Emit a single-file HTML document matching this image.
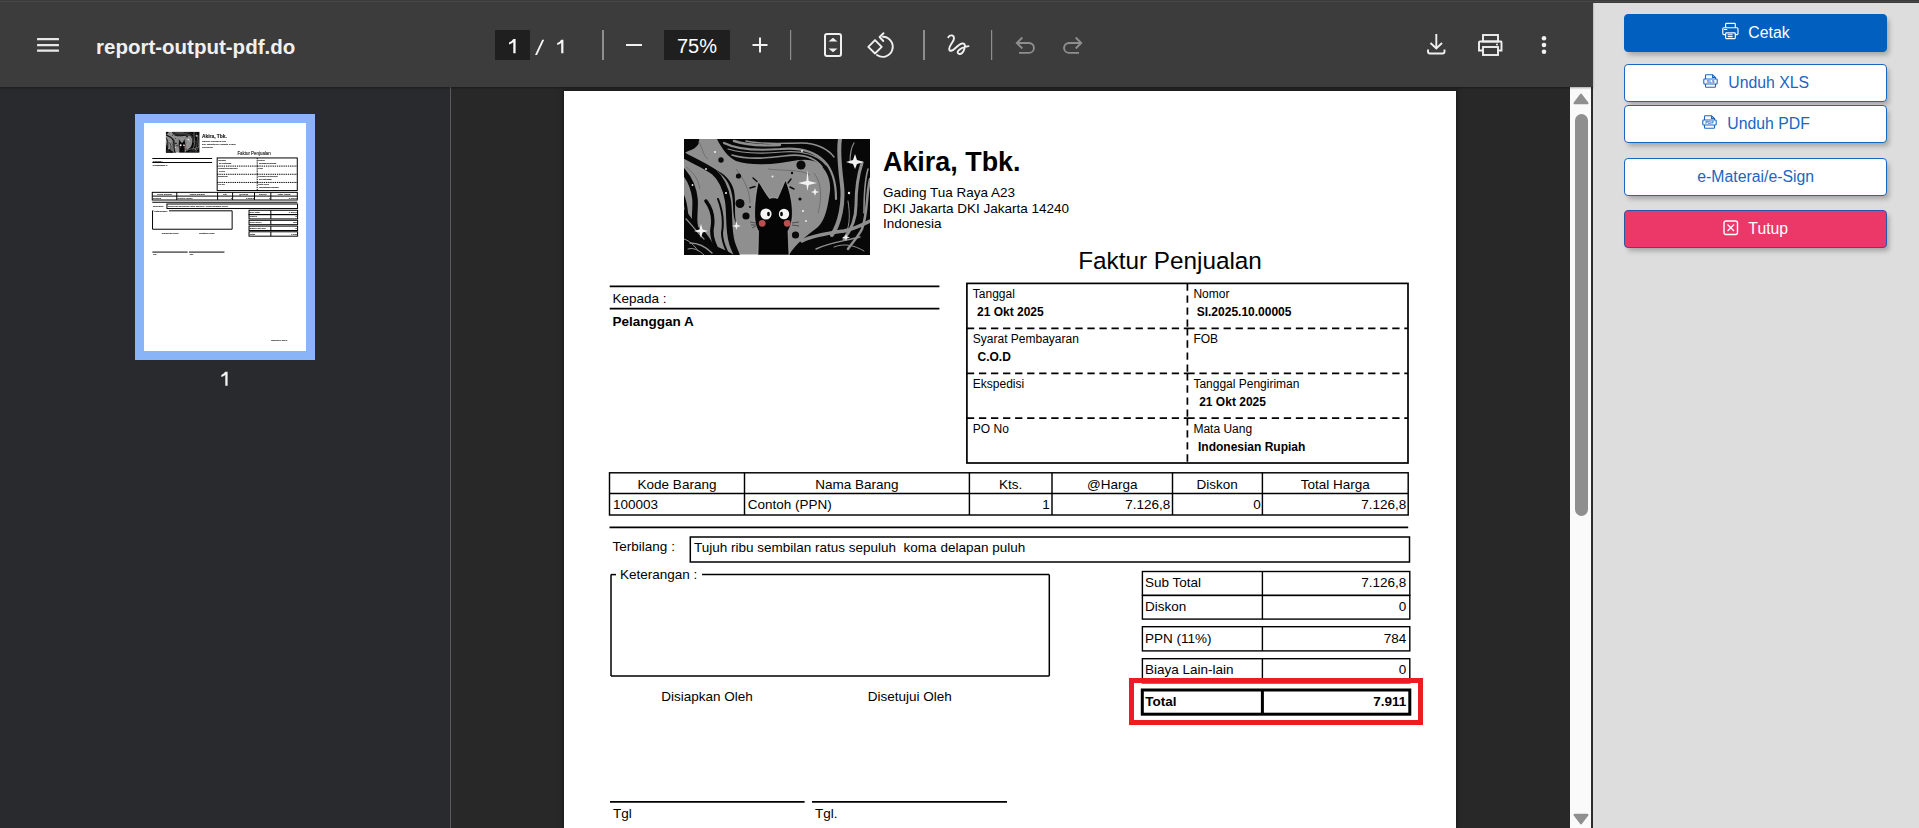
<!DOCTYPE html>
<html><head><meta charset="utf-8">
<style>
*{margin:0;padding:0;box-sizing:border-box}
html,body{width:1919px;height:828px;overflow:hidden;background:#282828;font-family:"Liberation Sans",sans-serif}
.abs{position:absolute}
#toolbar{position:absolute;left:0;top:0;width:1593px;height:87px;background:#3c3c3c;z-index:2;box-shadow:0 1px 2px rgba(0,0,0,0.35)}
#sidebar{position:absolute;left:0;top:87px;width:450px;height:741px;background:#292a2d}
#sidesep{position:absolute;left:450px;top:87px;width:1px;height:741px;background:#5a5a5a}
#page{position:absolute;left:564px;top:91px;width:892px;height:737px;background:#fff;overflow:hidden;box-shadow:0 0 4px 1px rgba(0,0,0,0.42)}
#thumbwrap{position:absolute;left:135px;top:114px;width:180px;height:246px;background:#8ab4f8}
#thumb{position:absolute;left:9px;top:9px;width:162px;height:228px;background:#fff;overflow:hidden}
#thumbin .t{-webkit-text-stroke:0.9px #555}
#thumbin{position:absolute;left:0;top:0;width:892px;height:1262px;transform:scale(0.18161);transform-origin:0 0}
#scroll{position:absolute;left:1570px;top:87px;width:21px;height:741px;background:#fafafa}
#scrollline{position:absolute;left:1591px;top:3px;width:2px;height:825px;background:#2d2d2d}
#panel{position:absolute;left:1593px;top:3px;width:326px;height:825px;background:#dddddd}
.btn{position:absolute;left:31px;width:263px;border-radius:4px;box-shadow:3px 4px 5px -1px rgba(0,0,0,0.26)}
.primary{background:#005fbf;border:1px solid #005fbf}
.outline{background:#fff;border:1px solid #1a66c0}
.danger{background:#ec3869;border:1px solid #2a58a0}
.bt{position:absolute;top:10px;margin-left:-0.7px;font-size:15.8px;line-height:1;white-space:nowrap}
.primary .bt,.danger .bt{color:#fff}
.outline .bt{color:#1a66c0}
.ico{position:absolute}
.t{position:absolute;white-space:nowrap;line-height:1}
</style></head><body>
<div id="toolbar">
<svg class="abs" style="left:0;top:0" width="1593" height="87" viewBox="0 0 1593 87">
 <g fill="#e8e8e8">
  <rect x="37" y="38" width="22" height="2.2" rx="0.5"/>
  <rect x="37" y="44" width="22" height="2.2" rx="0.5"/>
  <rect x="37" y="49.5" width="22" height="2.2" rx="0.5"/>
 </g>
 <rect x="495" y="30" width="35" height="30" fill="#1f1f1f"/>
 <rect x="664" y="30" width="66" height="30" fill="#1f1f1f"/>
 <g fill="#8e8e8e">
  <rect x="602" y="30" width="2" height="30"/>
  <rect x="790" y="30" width="1.2" height="30"/>
  <rect x="923" y="30" width="2" height="30"/>
  <rect x="991" y="30" width="1.2" height="30"/>
 </g>
 <g fill="none" stroke="#f0f0f0" stroke-width="2">
  <line x1="626" y1="45" x2="642" y2="45"/>
  <line x1="752.5" y1="45" x2="767.5" y2="45"/>
  <line x1="760" y1="37.5" x2="760" y2="52.5"/>
  <rect x="825" y="34" width="16" height="22" rx="2"/>
 </g>
 <g fill="#f0f0f0">
  <path d="M828.5 41.5 L833 37.8 L837.5 41.5 Z"/>
  <path d="M828.5 48.5 L833 52.2 L837.5 48.5 Z"/>
 </g>
 <g fill="none" stroke="#f0f0f0" stroke-width="1.9" stroke-linecap="round" stroke-linejoin="round">
  <path d="M868.3 46.8 L875 40.1 L881.7 46.8 L875 53.5 Z"/>
  <path d="M877 55 A10 10 0 1 0 883 36.8"/>
  <path d="M883.5 33.2 L879.6 37 L883.3 41"/>
  <path d="M948.3 37.3 C950 34.5 953.8 34.8 954 38.2 C954.2 41.5 949.3 45 949.2 48.8 C949.1 52 952.5 51 955.5 48 C958.3 45.2 961 42.5 963.7 43.7 C966.5 45.2 963.5 54.5 959.3 54 C955.3 53.3 958.5 47.8 968.5 46.1"/>
 </g>
 <g fill="none" stroke="#8e8e8e" stroke-width="1.9" stroke-linejoin="miter">
  <path d="M1022.3 37.5 L1016.8 43 L1022.3 48.5"/>
  <path d="M1016.8 43 L1029 43 A4.95 4.95 0 0 1 1029 52.9 L1019 52.9"/>
  <path d="M1075.7 37.5 L1081.2 43 L1075.7 48.5"/>
  <path d="M1081.2 43 L1069 43 A4.95 4.95 0 0 0 1069 52.9 L1079 52.9"/>
 </g>
 <g fill="none" stroke="#f0f0f0" stroke-width="1.9">
  <line x1="1436.3" y1="34" x2="1436.3" y2="48"/>
  <path d="M1430.5 43 L1436.3 48.5 L1442 43"/>
  <path d="M1428 49.5 L1428 51.5 Q1428 53.5 1430 53.5 L1442.5 53.5 Q1444.5 53.5 1444.5 51.5 L1444.5 49.5"/>
  <rect x="1483" y="35" width="15" height="6.5"/>
  <path d="M1483 50.5 L1479 50.5 L1479 42.5 Q1479 41.5 1480 41.5 L1501 41.5 Q1501.5 41.5 1501.5 42.5 L1501.5 50.5 L1497.5 50.5"/>
  <rect x="1483" y="47" width="15" height="8"/>
 </g>
 <g fill="#f0f0f0">
  <circle cx="1497" cy="44.5" r="1"/>
  <circle cx="1544" cy="38.2" r="2.3"/>
  <circle cx="1544" cy="45" r="2.3"/>
  <circle cx="1544" cy="51.7" r="2.3"/>
 </g>
 <g fill="#f8f8f8">
  <path d="M513.3 38.9 H515.6 V53.2 H513.3 V42.3 Q511.5 43.8 509 44.6 V42.5 Q512 41.3 513.3 38.9 Z"/>
  <path d="M542.2 39.7 H544.2 L537 55 H535 Z"/>
  <path d="M561.2 39.7 H563.4 V53.2 H561.2 V43 Q559.5 44.4 557.2 45.1 V43.1 Q560 42 561.2 39.7 Z"/>
 </g>
</svg>
<div class="t" style="left:96px;top:37.4px;font-size:20.5px;font-weight:bold;color:#f0f0f0">report-output-pdf.do</div>
<div class="t" style="left:677px;top:36px;font-size:20px;color:#fff">75%</div>
</div>
<div id="sidebar"></div>
<div id="sidesep"></div>
<div id="thumbwrap"><div id="thumb"><div id="thumbin">
<svg class="abs" style="left:0;top:0" width="892" height="1262" viewBox="0 0 892 1262">
<line x1="45.70" y1="195.40" x2="375.40" y2="195.40" stroke="#000" stroke-width="5.460000000000001"/>
<line x1="45.70" y1="217.60" x2="375.40" y2="217.60" stroke="#000" stroke-width="5.460000000000001"/>
<rect x="402.90" y="192.40" width="441.10" height="179.60" fill="none" stroke="#000" stroke-width="5.460000000000001"/>
<line x1="623.40" y1="192.40" x2="623.40" y2="237.30" stroke="#000" stroke-width="5.460000000000001" stroke-dasharray="7.3 4.75"/>
<line x1="623.40" y1="237.30" x2="623.40" y2="282.30" stroke="#000" stroke-width="5.460000000000001" stroke-dasharray="7.3 4.75"/>
<line x1="623.40" y1="282.30" x2="623.40" y2="327.20" stroke="#000" stroke-width="5.460000000000001" stroke-dasharray="7.3 4.75"/>
<line x1="623.40" y1="327.20" x2="623.40" y2="372.00" stroke="#000" stroke-width="5.460000000000001" stroke-dasharray="7.3 4.75"/>
<line x1="402.90" y1="237.30" x2="623.40" y2="237.30" stroke="#000" stroke-width="5.460000000000001" stroke-dasharray="7.3 4.75"/>
<line x1="623.40" y1="237.30" x2="844.00" y2="237.30" stroke="#000" stroke-width="5.460000000000001" stroke-dasharray="7.3 4.75"/>
<line x1="402.90" y1="282.30" x2="623.40" y2="282.30" stroke="#000" stroke-width="5.460000000000001" stroke-dasharray="7.3 4.75"/>
<line x1="623.40" y1="282.30" x2="844.00" y2="282.30" stroke="#000" stroke-width="5.460000000000001" stroke-dasharray="7.3 4.75"/>
<line x1="402.90" y1="327.20" x2="623.40" y2="327.20" stroke="#000" stroke-width="5.460000000000001" stroke-dasharray="7.3 4.75"/>
<line x1="623.40" y1="327.20" x2="844.00" y2="327.20" stroke="#000" stroke-width="5.460000000000001" stroke-dasharray="7.3 4.75"/>
<rect x="45.50" y="381.80" width="798.70" height="42.20" fill="none" stroke="#000" stroke-width="5.460000000000001"/>
<line x1="45.50" y1="402.50" x2="844.20" y2="402.50" stroke="#000" stroke-width="5.460000000000001"/>
<line x1="180.50" y1="381.80" x2="180.50" y2="424.00" stroke="#000" stroke-width="5.460000000000001"/>
<line x1="405.40" y1="381.80" x2="405.40" y2="424.00" stroke="#000" stroke-width="5.460000000000001"/>
<line x1="488.00" y1="381.80" x2="488.00" y2="424.00" stroke="#000" stroke-width="5.460000000000001"/>
<line x1="608.50" y1="381.80" x2="608.50" y2="424.00" stroke="#000" stroke-width="5.460000000000001"/>
<line x1="698.40" y1="381.80" x2="698.40" y2="424.00" stroke="#000" stroke-width="5.460000000000001"/>
<line x1="45.50" y1="436.40" x2="844.20" y2="436.40" stroke="#000" stroke-width="5.460000000000001"/>
<rect x="126.30" y="446.00" width="719.20" height="25.00" fill="none" stroke="#000" stroke-width="5.460000000000001"/>
<line x1="47.00" y1="483.60" x2="52.00" y2="483.60" stroke="#000" stroke-width="5.460000000000001"/>
<line x1="138.00" y1="483.60" x2="485.30" y2="483.60" stroke="#000" stroke-width="5.460000000000001"/>
<line x1="47.00" y1="483.60" x2="47.00" y2="584.90" stroke="#000" stroke-width="5.460000000000001"/>
<line x1="485.30" y1="483.60" x2="485.30" y2="584.90" stroke="#000" stroke-width="5.460000000000001"/>
<line x1="47.00" y1="584.90" x2="485.30" y2="584.90" stroke="#000" stroke-width="5.460000000000001"/>
<line x1="46.00" y1="710.80" x2="240.60" y2="710.80" stroke="#000" stroke-width="5.460000000000001"/>
<line x1="248.00" y1="710.80" x2="443.00" y2="710.80" stroke="#000" stroke-width="5.460000000000001"/>
<rect x="578.40" y="480.50" width="267.40" height="23.90" fill="none" stroke="#000" stroke-width="5.460000000000001"/>
<rect x="578.40" y="504.40" width="267.40" height="23.70" fill="none" stroke="#000" stroke-width="5.460000000000001"/>
<line x1="698.40" y1="480.50" x2="698.40" y2="528.10" stroke="#000" stroke-width="5.460000000000001"/>
<rect x="578.40" y="535.70" width="267.40" height="24.20" fill="none" stroke="#000" stroke-width="5.460000000000001"/>
<line x1="698.40" y1="535.70" x2="698.40" y2="559.90" stroke="#000" stroke-width="5.460000000000001"/>
<rect x="578.40" y="567.70" width="267.40" height="24.10" fill="none" stroke="#000" stroke-width="5.460000000000001"/>
<line x1="698.40" y1="567.70" x2="698.40" y2="591.80" stroke="#000" stroke-width="5.460000000000001"/>
<rect x="578.30" y="599.00" width="267.50" height="24.20" fill="none" stroke="#000" stroke-width="5.460000000000001"/>
<line x1="698.40" y1="599.00" x2="698.40" y2="623.20" stroke="#000" stroke-width="5.460000000000001"/>
</svg>
<div class="abs" style="left:120px;top:48px;width:186px;height:115.5px"><svg width="186" height="115.5" viewBox="0 0 186 115.5" style="display:block">
<rect width="186" height="115.5" fill="#8f8f8f"/>
<g fill="#080808">
 <!-- top-left blob -->
 <path d="M0 0 H15 C16 5 12 9 7 11 C3 12 1 14 0 15 Z"/>
 <!-- top black mass (arc) -->
 <path d="M33 0 H186 V116 H105 C112 104 124 96 134 88 C142 80 144 66 146 52 C147 40 142 30 134 24 C124 18 110 22 96 24 C80 26 64 26 52 22 C44 18 38 10 33 0 Z"/>
 <!-- bottom left mass -->
 <path d="M0 70 C6 76 10 84 14 88 C22 92 26 100 30 106 C34 112 38 114 40 116 H0 Z"/>
 <path d="M30 30 C40 36 46 44 48 56 C50 66 48 76 52 84 C50 74 52 62 50 52 C48 42 40 34 30 30 Z"/>
 <path d="M0 92 C8 96 16 100 24 104 C34 108 44 112 50 116 H0 Z"/>
</g>
<g fill="none" stroke="#080808" stroke-linecap="round">
 <path d="M1 17 C10 22 20 26 30 33 C38 40 42 50 44 62 C46 76 44 90 48 104 C50 110 52 114 53 117" stroke-width="6"/>
 <path d="M-1 32 C6 40 10 50 11 60 C12 72 8 84 14 96 C18 104 22 110 26 117" stroke-width="5.5"/>
 <path d="M-2 55 C3 64 2 74 4 86" stroke-width="3"/>
 <path d="M22 62 C28 70 30 80 28 90 C27 100 32 108 36 117" stroke-width="3.5"/>
 <path d="M34 60 C38 70 40 82 38 94 C38 104 42 110 45 117" stroke-width="2"/>
</g>
<!-- gray streaks over black masses -->
<g fill="none" stroke="#8f8f8f" stroke-linecap="round">
 <path d="M40 4 C52 10 70 12 96 10 C116 8 130 12 140 22 C148 30 152 44 152 60" stroke-width="2.2"/>
 <path d="M62 2 C80 6 100 4 118 4 C132 4 144 10 150 18" stroke-width="1.4"/>
 <path d="M48 16 C60 20 78 20 100 17 C120 14 132 20 138 28" stroke-width="1.6"/>
 <path d="M44 10 C56 14 76 15 98 13 C118 11 134 16 142 26" stroke-width="1.2"/>
 <path d="M50 2 C62 6 78 7 96 6" stroke-width="2.4"/>
 <path d="M156 0 C154 12 156 30 158 46 C160 64 156 84 148 96" stroke-width="4"/>
 <path d="M178 24 C174 36 172 52 172 66 C172 80 168 90 160 100" stroke-width="3"/>
 <path d="M184 30 C180 44 180 60 180 74" stroke-width="1.6"/>
 <path d="M186 40 C182 56 184 74 178 90 C174 98 168 104 164 110" stroke-width="2.5"/>
 <path d="M150 108 C160 104 170 106 180 112" stroke-width="1"/>
 <path d="M164 62 C166 74 166 86 162 94" stroke-width="1"/>
 <path d="M170 4 C166 10 166 18 166 24" stroke-width="1.2"/>
 <path d="M118 102 C130 96 146 94 160 92 C170 90 178 86 186 82" stroke-width="3.5"/>
 <path d="M132 110 C144 104 160 102 176 98" stroke-width="1.4"/>
 <path d="M6 104 C14 104 22 108 28 114" stroke-width="1.4"/>
 <path d="M2 80 C8 86 12 92 20 100" stroke-width="1.2"/>
 <path d="M4 110 C10 108 16 112 20 116" stroke-width="1"/>
 <path d="M0 100 C6 102 10 106 14 112" stroke-width="1"/>
</g>
<g fill="none" stroke="#5a5a5a" stroke-width="0.6">
 <path d="M14 2 C20 10 18 16 24 20"/><path d="M52 30 C60 40 66 52 66 64"/><path d="M130 34 C138 44 138 60 134 74"/>
 <path d="M2 28 C10 34 14 40 16 50"/><path d="M84 30 C100 32 116 30 126 36"/>
</g>
<!-- cat -->
<path d="M74.5 42.5 C78 48 82 55 85.5 59.5 C88 58.5 91 58.5 93.5 59.5 C96 54 99 47 101.6 41 C105 50 108 60 108.4 72 C108.6 82 106.5 88 104 92 L105 116 L74 116 L74.5 92 C71.5 88 70.3 80 70.6 72 C71 60 72.5 50 74.5 42.5 Z" fill="#050505" stroke="#c0c0c0" stroke-width="0.6"/>
<circle cx="82" cy="75" r="5.6" fill="#f4f4f4"/>
<circle cx="100" cy="75" r="5.2" fill="#f4f4f4"/>
<ellipse cx="84.5" cy="75" rx="1.4" ry="2.2" fill="#000"/>
<ellipse cx="97.5" cy="75" rx="1.4" ry="2.2" fill="#000"/>
<circle cx="78.2" cy="84.3" r="3.4" fill="#b85050"/>
<circle cx="103.2" cy="84.3" r="3.4" fill="#b85050"/>
<g stroke="#111" stroke-width="0.5"><path d="M66 83 L72 84 M67 86 L72 86 M68 89 L72 87 M108 84 L115 83 M108 86 L115 87"/></g>
<g fill="#f2f2f2">
 <path d="M17 93 L18.6 87.5 L24 86 L18.6 84.5 L17 79 L15.4 84.5 L10 86 L15.4 87.5 Z" transform="translate(0,6)"/>
 <path d="M123.5 52 L124.6 46 L133 44 L124.6 42 L123.5 31 L122.4 42 L114 44 L122.4 46 Z"/>
 <path d="M172 30 L174 25 L181 23 L174 21 L172 15 L170 21 L163 23 L170 25 Z" transform="translate(-1,0)"/>
 <path d="M52.5 91 L53.4 88 L57 87 L53.4 86 L52.5 82 L51.6 86 L48 87 L51.6 88 Z"/>
 <path d="M130 56 L131 53 L134 52 L131 51 L130 48 L129 51 L126 52 L129 53 Z" transform="translate(1,1)"/>
 <path d="M162 102 L163 99.5 L166 98.5 L163 97.5 L162 95 L161 97.5 L158 98.5 L161 99.5 Z"/>
 <circle cx="31" cy="13" r="1"/><circle cx="22" cy="30" r="0.9"/><circle cx="8.5" cy="46" r="0.9"/>
 <circle cx="165" cy="54" r="1.2"/><circle cx="118" cy="12" r="1"/><circle cx="42" cy="54" r="1"/>
 <circle cx="88.5" cy="37.5" r="1"/><circle cx="119" cy="72" r="1"/><circle cx="122" cy="82" r="0.9"/>
 <path d="M55 64 L57 62 L59 64 L58 66 L56 66 Z" opacity="0.8"/>
</g>
<g fill="#0a0a0a">
 <circle cx="37" cy="21" r="2.7"/><circle cx="117" cy="26" r="4.6"/><circle cx="54.5" cy="37" r="2.6"/>
 <circle cx="56" cy="64.5" r="4.5"/><circle cx="62" cy="77" r="3.6"/><circle cx="111.5" cy="96" r="3.6"/>
 <circle cx="108" cy="34" r="1.2"/><circle cx="66" cy="68" r="1"/><circle cx="116" cy="60" r="1.6"/>
</g>
<g stroke="#0a0a0a" stroke-width="1.4" stroke-linecap="round">
 <path d="M69 39 L73 42.5"/><path d="M66 49 L71 47.5"/><path d="M107 40 L104 44"/><path d="M110 50 L106 48"/>
</g>
</svg>
</div>
<div class="t" style="left:319.00px;top:58.23px;font-size:26.9px;font-weight:bold;color:#000;">Akira, Tbk.</div>
<div class="t" style="left:319.00px;top:94.97px;font-size:13.5px;font-weight:normal;color:#000;">Gading Tua Raya A23</div>
<div class="t" style="left:319.00px;top:110.97px;font-size:13.5px;font-weight:normal;color:#000;">DKI Jakarta DKI Jakarta 14240</div>
<div class="t" style="left:319.00px;top:126.37px;font-size:13.5px;font-weight:normal;color:#000;">Indonesia</div>
<div class="t" style="left:514.20px;top:158.43px;font-size:24.3px;font-weight:normal;color:#000;">Faktur Penjualan</div>
<div class="t" style="left:48.50px;top:200.57px;font-size:13.5px;font-weight:normal;color:#000;">Kepada :</div>
<div class="t" style="left:48.50px;top:224.27px;font-size:13.5px;font-weight:bold;color:#000;">Pelanggan A</div>
<div class="t" style="left:408.80px;top:197.14px;font-size:12px;font-weight:normal;color:#000;">Tanggal</div>
<div class="t" style="left:413.00px;top:214.84px;font-size:12px;font-weight:bold;color:#000;">21 Okt 2025</div>
<div class="t" style="left:629.40px;top:197.14px;font-size:12px;font-weight:normal;color:#000;">Nomor</div>
<div class="t" style="left:632.70px;top:215.24px;font-size:12px;font-weight:bold;color:#000;">SI.2025.10.00005</div>
<div class="t" style="left:408.80px;top:242.44px;font-size:12px;font-weight:normal;color:#000;">Syarat Pembayaran</div>
<div class="t" style="left:413.50px;top:260.34px;font-size:12px;font-weight:bold;color:#000;">C.O.D</div>
<div class="t" style="left:629.40px;top:242.44px;font-size:12px;font-weight:normal;color:#000;">FOB</div>
<div class="t" style="left:408.80px;top:286.94px;font-size:12px;font-weight:normal;color:#000;">Ekspedisi</div>
<div class="t" style="left:629.40px;top:287.04px;font-size:12px;font-weight:normal;color:#000;">Tanggal Pengiriman</div>
<div class="t" style="left:635.20px;top:304.94px;font-size:12px;font-weight:bold;color:#000;">21 Okt 2025</div>
<div class="t" style="left:408.80px;top:332.14px;font-size:12px;font-weight:normal;color:#000;">PO No</div>
<div class="t" style="left:629.40px;top:332.14px;font-size:12px;font-weight:normal;color:#000;">Mata Uang</div>
<div class="t" style="left:634.00px;top:350.24px;font-size:12px;font-weight:bold;color:#000;">Indonesian Rupiah</div>
<div class="t" style="left:-187.00px;width:600px;text-align:center;top:386.57px;font-size:13.5px;font-weight:normal;color:#000;">Kode Barang</div>
<div class="t" style="left:-7.10px;width:600px;text-align:center;top:386.57px;font-size:13.5px;font-weight:normal;color:#000;">Nama Barang</div>
<div class="t" style="left:146.70px;width:600px;text-align:center;top:386.57px;font-size:13.5px;font-weight:normal;color:#000;">Kts.</div>
<div class="t" style="left:248.30px;width:600px;text-align:center;top:386.57px;font-size:13.5px;font-weight:normal;color:#000;">@Harga</div>
<div class="t" style="left:353.20px;width:600px;text-align:center;top:386.57px;font-size:13.5px;font-weight:normal;color:#000;">Diskon</div>
<div class="t" style="left:471.20px;width:600px;text-align:center;top:386.57px;font-size:13.5px;font-weight:normal;color:#000;">Total Harga</div>
<div class="t" style="left:49.00px;top:407.47px;font-size:13.5px;font-weight:normal;color:#000;">100003</div>
<div class="t" style="left:183.70px;top:407.47px;font-size:13.5px;font-weight:normal;color:#000;">Contoh (PPN)</div>
<div class="t" style="left:85.80px;width:400px;text-align:right;top:407.47px;font-size:13.5px;font-weight:normal;color:#000;">1</div>
<div class="t" style="left:206.30px;width:400px;text-align:right;top:407.47px;font-size:13.5px;font-weight:normal;color:#000;">7.126,8</div>
<div class="t" style="left:296.80px;width:400px;text-align:right;top:407.47px;font-size:13.5px;font-weight:normal;color:#000;">0</div>
<div class="t" style="left:442.30px;width:400px;text-align:right;top:407.47px;font-size:13.5px;font-weight:normal;color:#000;">7.126,8</div>
<div class="t" style="left:48.60px;top:449.07px;font-size:13.5px;font-weight:normal;color:#000;">Terbilang :</div>
<div class="t" style="left:130.00px;top:450.07px;font-size:13.5px;font-weight:normal;color:#000;">Tujuh ribu sembilan ratus sepuluh&nbsp; koma delapan puluh</div>
<div class="t" style="left:56.00px;top:476.97px;font-size:13.5px;font-weight:normal;color:#000;">Keterangan :</div>
<div class="t" style="left:97.20px;top:599.07px;font-size:13.5px;font-weight:normal;color:#000;">Disiapkan Oleh</div>
<div class="t" style="left:303.80px;top:599.07px;font-size:13.5px;font-weight:normal;color:#000;">Disetujui Oleh</div>
<div class="t" style="left:49.00px;top:715.57px;font-size:13.5px;font-weight:normal;color:#000;">Tgl</div>
<div class="t" style="left:251.00px;top:715.57px;font-size:13.5px;font-weight:normal;color:#000;">Tgl.</div>
<div class="t" style="left:581.00px;top:485.07px;font-size:13.5px;font-weight:normal;color:#000;">Sub Total</div>
<div class="t" style="left:442.30px;width:400px;text-align:right;top:485.07px;font-size:13.5px;font-weight:normal;color:#000;">7.126,8</div>
<div class="t" style="left:581.00px;top:508.97px;font-size:13.5px;font-weight:normal;color:#000;">Diskon</div>
<div class="t" style="left:442.30px;width:400px;text-align:right;top:508.97px;font-size:13.5px;font-weight:normal;color:#000;">0</div>
<div class="t" style="left:581.00px;top:541.17px;font-size:13.5px;font-weight:normal;color:#000;">PPN (11%)</div>
<div class="t" style="left:442.30px;width:400px;text-align:right;top:541.17px;font-size:13.5px;font-weight:normal;color:#000;">784</div>
<div class="t" style="left:581.00px;top:572.07px;font-size:13.5px;font-weight:normal;color:#000;">Biaya Lain-lain</div>
<div class="t" style="left:442.30px;width:400px;text-align:right;top:572.07px;font-size:13.5px;font-weight:normal;color:#000;">0</div>
<div class="t" style="left:581.30px;top:604.07px;font-size:13.5px;font-weight:bold;color:#000;">Total</div>
<div class="t" style="left:442.30px;width:400px;text-align:right;top:604.07px;font-size:13.5px;font-weight:bold;color:#000;">7.911</div>
<div class="t" style="left:699.00px;top:1192.84px;font-size:12px;font-weight:normal;color:#000;">Halaman 1 dari 1</div>

</div></div></div>
<svg class="abs" style="left:215px;top:365px" width="20" height="25" viewBox="215 365 20 25"><path d="M225.2 371.8 H227.6 V385.8 H225.3 V375 Q223.5 376.3 221.3 377 V374.9 Q224 373.8 225.2 371.8 Z" fill="#f2f2f2"/></svg>
<div id="page">
<svg class="abs" style="left:0;top:0" width="892" height="1262" viewBox="0 0 892 1262">
<line x1="45.70" y1="195.40" x2="375.40" y2="195.40" stroke="#000" stroke-width="1.7"/>
<line x1="45.70" y1="217.60" x2="375.40" y2="217.60" stroke="#000" stroke-width="1.7"/>
<rect x="402.90" y="192.40" width="441.10" height="179.60" fill="none" stroke="#000" stroke-width="1.7"/>
<line x1="623.40" y1="192.40" x2="623.40" y2="237.30" stroke="#000" stroke-width="1.7" stroke-dasharray="7.3 4.75"/>
<line x1="623.40" y1="237.30" x2="623.40" y2="282.30" stroke="#000" stroke-width="1.7" stroke-dasharray="7.3 4.75"/>
<line x1="623.40" y1="282.30" x2="623.40" y2="327.20" stroke="#000" stroke-width="1.7" stroke-dasharray="7.3 4.75"/>
<line x1="623.40" y1="327.20" x2="623.40" y2="372.00" stroke="#000" stroke-width="1.7" stroke-dasharray="7.3 4.75"/>
<line x1="402.90" y1="237.30" x2="623.40" y2="237.30" stroke="#000" stroke-width="1.7" stroke-dasharray="7.3 4.75"/>
<line x1="623.40" y1="237.30" x2="844.00" y2="237.30" stroke="#000" stroke-width="1.7" stroke-dasharray="7.3 4.75"/>
<line x1="402.90" y1="282.30" x2="623.40" y2="282.30" stroke="#000" stroke-width="1.7" stroke-dasharray="7.3 4.75"/>
<line x1="623.40" y1="282.30" x2="844.00" y2="282.30" stroke="#000" stroke-width="1.7" stroke-dasharray="7.3 4.75"/>
<line x1="402.90" y1="327.20" x2="623.40" y2="327.20" stroke="#000" stroke-width="1.7" stroke-dasharray="7.3 4.75"/>
<line x1="623.40" y1="327.20" x2="844.00" y2="327.20" stroke="#000" stroke-width="1.7" stroke-dasharray="7.3 4.75"/>
<rect x="45.50" y="381.80" width="798.70" height="42.20" fill="none" stroke="#000" stroke-width="1.45"/>
<line x1="45.50" y1="402.50" x2="844.20" y2="402.50" stroke="#000" stroke-width="1.45"/>
<line x1="180.50" y1="381.80" x2="180.50" y2="424.00" stroke="#000" stroke-width="1.45"/>
<line x1="405.40" y1="381.80" x2="405.40" y2="424.00" stroke="#000" stroke-width="1.45"/>
<line x1="488.00" y1="381.80" x2="488.00" y2="424.00" stroke="#000" stroke-width="1.45"/>
<line x1="608.50" y1="381.80" x2="608.50" y2="424.00" stroke="#000" stroke-width="1.45"/>
<line x1="698.40" y1="381.80" x2="698.40" y2="424.00" stroke="#000" stroke-width="1.45"/>
<line x1="45.50" y1="436.40" x2="844.20" y2="436.40" stroke="#000" stroke-width="1.7"/>
<rect x="126.30" y="446.00" width="719.20" height="25.00" fill="none" stroke="#000" stroke-width="1.5"/>
<line x1="47.00" y1="483.60" x2="52.00" y2="483.60" stroke="#000" stroke-width="1.5"/>
<line x1="138.00" y1="483.60" x2="485.30" y2="483.60" stroke="#000" stroke-width="1.5"/>
<line x1="47.00" y1="483.60" x2="47.00" y2="584.90" stroke="#000" stroke-width="1.5"/>
<line x1="485.30" y1="483.60" x2="485.30" y2="584.90" stroke="#000" stroke-width="1.5"/>
<line x1="47.00" y1="584.90" x2="485.30" y2="584.90" stroke="#000" stroke-width="1.5"/>
<line x1="46.00" y1="710.80" x2="240.60" y2="710.80" stroke="#000" stroke-width="1.7"/>
<line x1="248.00" y1="710.80" x2="443.00" y2="710.80" stroke="#000" stroke-width="1.7"/>
<rect x="578.40" y="480.50" width="267.40" height="23.90" fill="none" stroke="#000" stroke-width="1.4"/>
<rect x="578.40" y="504.40" width="267.40" height="23.70" fill="none" stroke="#000" stroke-width="1.4"/>
<line x1="698.40" y1="480.50" x2="698.40" y2="528.10" stroke="#000" stroke-width="1.4"/>
<rect x="578.40" y="535.70" width="267.40" height="24.20" fill="none" stroke="#000" stroke-width="1.4"/>
<line x1="698.40" y1="535.70" x2="698.40" y2="559.90" stroke="#000" stroke-width="1.4"/>
<rect x="578.40" y="567.70" width="267.40" height="24.10" fill="none" stroke="#000" stroke-width="1.4"/>
<line x1="698.40" y1="567.70" x2="698.40" y2="591.80" stroke="#000" stroke-width="1.4"/>
<rect x="578.30" y="599.00" width="267.50" height="24.20" fill="none" stroke="#000" stroke-width="3"/>
<line x1="698.40" y1="599.00" x2="698.40" y2="623.20" stroke="#000" stroke-width="3"/>
</svg>
<div class="abs" style="left:120px;top:48px;width:186px;height:115.5px"><svg width="186" height="115.5" viewBox="0 0 186 115.5" style="display:block">
<rect width="186" height="115.5" fill="#8f8f8f"/>
<g fill="#080808">
 <!-- top-left blob -->
 <path d="M0 0 H15 C16 5 12 9 7 11 C3 12 1 14 0 15 Z"/>
 <!-- top black mass (arc) -->
 <path d="M33 0 H186 V116 H105 C112 104 124 96 134 88 C142 80 144 66 146 52 C147 40 142 30 134 24 C124 18 110 22 96 24 C80 26 64 26 52 22 C44 18 38 10 33 0 Z"/>
 <!-- bottom left mass -->
 <path d="M0 70 C6 76 10 84 14 88 C22 92 26 100 30 106 C34 112 38 114 40 116 H0 Z"/>
 <path d="M30 30 C40 36 46 44 48 56 C50 66 48 76 52 84 C50 74 52 62 50 52 C48 42 40 34 30 30 Z"/>
 <path d="M0 92 C8 96 16 100 24 104 C34 108 44 112 50 116 H0 Z"/>
</g>
<g fill="none" stroke="#080808" stroke-linecap="round">
 <path d="M1 17 C10 22 20 26 30 33 C38 40 42 50 44 62 C46 76 44 90 48 104 C50 110 52 114 53 117" stroke-width="6"/>
 <path d="M-1 32 C6 40 10 50 11 60 C12 72 8 84 14 96 C18 104 22 110 26 117" stroke-width="5.5"/>
 <path d="M-2 55 C3 64 2 74 4 86" stroke-width="3"/>
 <path d="M22 62 C28 70 30 80 28 90 C27 100 32 108 36 117" stroke-width="3.5"/>
 <path d="M34 60 C38 70 40 82 38 94 C38 104 42 110 45 117" stroke-width="2"/>
</g>
<!-- gray streaks over black masses -->
<g fill="none" stroke="#8f8f8f" stroke-linecap="round">
 <path d="M40 4 C52 10 70 12 96 10 C116 8 130 12 140 22 C148 30 152 44 152 60" stroke-width="2.2"/>
 <path d="M62 2 C80 6 100 4 118 4 C132 4 144 10 150 18" stroke-width="1.4"/>
 <path d="M48 16 C60 20 78 20 100 17 C120 14 132 20 138 28" stroke-width="1.6"/>
 <path d="M44 10 C56 14 76 15 98 13 C118 11 134 16 142 26" stroke-width="1.2"/>
 <path d="M50 2 C62 6 78 7 96 6" stroke-width="2.4"/>
 <path d="M156 0 C154 12 156 30 158 46 C160 64 156 84 148 96" stroke-width="4"/>
 <path d="M178 24 C174 36 172 52 172 66 C172 80 168 90 160 100" stroke-width="3"/>
 <path d="M184 30 C180 44 180 60 180 74" stroke-width="1.6"/>
 <path d="M186 40 C182 56 184 74 178 90 C174 98 168 104 164 110" stroke-width="2.5"/>
 <path d="M150 108 C160 104 170 106 180 112" stroke-width="1"/>
 <path d="M164 62 C166 74 166 86 162 94" stroke-width="1"/>
 <path d="M170 4 C166 10 166 18 166 24" stroke-width="1.2"/>
 <path d="M118 102 C130 96 146 94 160 92 C170 90 178 86 186 82" stroke-width="3.5"/>
 <path d="M132 110 C144 104 160 102 176 98" stroke-width="1.4"/>
 <path d="M6 104 C14 104 22 108 28 114" stroke-width="1.4"/>
 <path d="M2 80 C8 86 12 92 20 100" stroke-width="1.2"/>
 <path d="M4 110 C10 108 16 112 20 116" stroke-width="1"/>
 <path d="M0 100 C6 102 10 106 14 112" stroke-width="1"/>
</g>
<g fill="none" stroke="#5a5a5a" stroke-width="0.6">
 <path d="M14 2 C20 10 18 16 24 20"/><path d="M52 30 C60 40 66 52 66 64"/><path d="M130 34 C138 44 138 60 134 74"/>
 <path d="M2 28 C10 34 14 40 16 50"/><path d="M84 30 C100 32 116 30 126 36"/>
</g>
<!-- cat -->
<path d="M74.5 42.5 C78 48 82 55 85.5 59.5 C88 58.5 91 58.5 93.5 59.5 C96 54 99 47 101.6 41 C105 50 108 60 108.4 72 C108.6 82 106.5 88 104 92 L105 116 L74 116 L74.5 92 C71.5 88 70.3 80 70.6 72 C71 60 72.5 50 74.5 42.5 Z" fill="#050505" stroke="#c0c0c0" stroke-width="0.6"/>
<circle cx="82" cy="75" r="5.6" fill="#f4f4f4"/>
<circle cx="100" cy="75" r="5.2" fill="#f4f4f4"/>
<ellipse cx="84.5" cy="75" rx="1.4" ry="2.2" fill="#000"/>
<ellipse cx="97.5" cy="75" rx="1.4" ry="2.2" fill="#000"/>
<circle cx="78.2" cy="84.3" r="3.4" fill="#b85050"/>
<circle cx="103.2" cy="84.3" r="3.4" fill="#b85050"/>
<g stroke="#111" stroke-width="0.5"><path d="M66 83 L72 84 M67 86 L72 86 M68 89 L72 87 M108 84 L115 83 M108 86 L115 87"/></g>
<g fill="#f2f2f2">
 <path d="M17 93 L18.6 87.5 L24 86 L18.6 84.5 L17 79 L15.4 84.5 L10 86 L15.4 87.5 Z" transform="translate(0,6)"/>
 <path d="M123.5 52 L124.6 46 L133 44 L124.6 42 L123.5 31 L122.4 42 L114 44 L122.4 46 Z"/>
 <path d="M172 30 L174 25 L181 23 L174 21 L172 15 L170 21 L163 23 L170 25 Z" transform="translate(-1,0)"/>
 <path d="M52.5 91 L53.4 88 L57 87 L53.4 86 L52.5 82 L51.6 86 L48 87 L51.6 88 Z"/>
 <path d="M130 56 L131 53 L134 52 L131 51 L130 48 L129 51 L126 52 L129 53 Z" transform="translate(1,1)"/>
 <path d="M162 102 L163 99.5 L166 98.5 L163 97.5 L162 95 L161 97.5 L158 98.5 L161 99.5 Z"/>
 <circle cx="31" cy="13" r="1"/><circle cx="22" cy="30" r="0.9"/><circle cx="8.5" cy="46" r="0.9"/>
 <circle cx="165" cy="54" r="1.2"/><circle cx="118" cy="12" r="1"/><circle cx="42" cy="54" r="1"/>
 <circle cx="88.5" cy="37.5" r="1"/><circle cx="119" cy="72" r="1"/><circle cx="122" cy="82" r="0.9"/>
 <path d="M55 64 L57 62 L59 64 L58 66 L56 66 Z" opacity="0.8"/>
</g>
<g fill="#0a0a0a">
 <circle cx="37" cy="21" r="2.7"/><circle cx="117" cy="26" r="4.6"/><circle cx="54.5" cy="37" r="2.6"/>
 <circle cx="56" cy="64.5" r="4.5"/><circle cx="62" cy="77" r="3.6"/><circle cx="111.5" cy="96" r="3.6"/>
 <circle cx="108" cy="34" r="1.2"/><circle cx="66" cy="68" r="1"/><circle cx="116" cy="60" r="1.6"/>
</g>
<g stroke="#0a0a0a" stroke-width="1.4" stroke-linecap="round">
 <path d="M69 39 L73 42.5"/><path d="M66 49 L71 47.5"/><path d="M107 40 L104 44"/><path d="M110 50 L106 48"/>
</g>
</svg>
</div>
<div class="t" style="left:319.00px;top:58.23px;font-size:26.9px;font-weight:bold;color:#000;">Akira, Tbk.</div>
<div class="t" style="left:319.00px;top:94.97px;font-size:13.5px;font-weight:normal;color:#000;">Gading Tua Raya A23</div>
<div class="t" style="left:319.00px;top:110.97px;font-size:13.5px;font-weight:normal;color:#000;">DKI Jakarta DKI Jakarta 14240</div>
<div class="t" style="left:319.00px;top:126.37px;font-size:13.5px;font-weight:normal;color:#000;">Indonesia</div>
<div class="t" style="left:514.20px;top:158.43px;font-size:24.3px;font-weight:normal;color:#000;">Faktur Penjualan</div>
<div class="t" style="left:48.50px;top:200.57px;font-size:13.5px;font-weight:normal;color:#000;">Kepada :</div>
<div class="t" style="left:48.50px;top:224.27px;font-size:13.5px;font-weight:bold;color:#000;">Pelanggan A</div>
<div class="t" style="left:408.80px;top:197.14px;font-size:12px;font-weight:normal;color:#000;">Tanggal</div>
<div class="t" style="left:413.00px;top:214.84px;font-size:12px;font-weight:bold;color:#000;">21 Okt 2025</div>
<div class="t" style="left:629.40px;top:197.14px;font-size:12px;font-weight:normal;color:#000;">Nomor</div>
<div class="t" style="left:632.70px;top:215.24px;font-size:12px;font-weight:bold;color:#000;">SI.2025.10.00005</div>
<div class="t" style="left:408.80px;top:242.44px;font-size:12px;font-weight:normal;color:#000;">Syarat Pembayaran</div>
<div class="t" style="left:413.50px;top:260.34px;font-size:12px;font-weight:bold;color:#000;">C.O.D</div>
<div class="t" style="left:629.40px;top:242.44px;font-size:12px;font-weight:normal;color:#000;">FOB</div>
<div class="t" style="left:408.80px;top:286.94px;font-size:12px;font-weight:normal;color:#000;">Ekspedisi</div>
<div class="t" style="left:629.40px;top:287.04px;font-size:12px;font-weight:normal;color:#000;">Tanggal Pengiriman</div>
<div class="t" style="left:635.20px;top:304.94px;font-size:12px;font-weight:bold;color:#000;">21 Okt 2025</div>
<div class="t" style="left:408.80px;top:332.14px;font-size:12px;font-weight:normal;color:#000;">PO No</div>
<div class="t" style="left:629.40px;top:332.14px;font-size:12px;font-weight:normal;color:#000;">Mata Uang</div>
<div class="t" style="left:634.00px;top:350.24px;font-size:12px;font-weight:bold;color:#000;">Indonesian Rupiah</div>
<div class="t" style="left:-187.00px;width:600px;text-align:center;top:386.57px;font-size:13.5px;font-weight:normal;color:#000;">Kode Barang</div>
<div class="t" style="left:-7.10px;width:600px;text-align:center;top:386.57px;font-size:13.5px;font-weight:normal;color:#000;">Nama Barang</div>
<div class="t" style="left:146.70px;width:600px;text-align:center;top:386.57px;font-size:13.5px;font-weight:normal;color:#000;">Kts.</div>
<div class="t" style="left:248.30px;width:600px;text-align:center;top:386.57px;font-size:13.5px;font-weight:normal;color:#000;">@Harga</div>
<div class="t" style="left:353.20px;width:600px;text-align:center;top:386.57px;font-size:13.5px;font-weight:normal;color:#000;">Diskon</div>
<div class="t" style="left:471.20px;width:600px;text-align:center;top:386.57px;font-size:13.5px;font-weight:normal;color:#000;">Total Harga</div>
<div class="t" style="left:49.00px;top:407.47px;font-size:13.5px;font-weight:normal;color:#000;">100003</div>
<div class="t" style="left:183.70px;top:407.47px;font-size:13.5px;font-weight:normal;color:#000;">Contoh (PPN)</div>
<div class="t" style="left:85.80px;width:400px;text-align:right;top:407.47px;font-size:13.5px;font-weight:normal;color:#000;">1</div>
<div class="t" style="left:206.30px;width:400px;text-align:right;top:407.47px;font-size:13.5px;font-weight:normal;color:#000;">7.126,8</div>
<div class="t" style="left:296.80px;width:400px;text-align:right;top:407.47px;font-size:13.5px;font-weight:normal;color:#000;">0</div>
<div class="t" style="left:442.30px;width:400px;text-align:right;top:407.47px;font-size:13.5px;font-weight:normal;color:#000;">7.126,8</div>
<div class="t" style="left:48.60px;top:449.07px;font-size:13.5px;font-weight:normal;color:#000;">Terbilang :</div>
<div class="t" style="left:130.00px;top:450.07px;font-size:13.5px;font-weight:normal;color:#000;">Tujuh ribu sembilan ratus sepuluh&nbsp; koma delapan puluh</div>
<div class="t" style="left:56.00px;top:476.97px;font-size:13.5px;font-weight:normal;color:#000;">Keterangan :</div>
<div class="t" style="left:97.20px;top:599.07px;font-size:13.5px;font-weight:normal;color:#000;">Disiapkan Oleh</div>
<div class="t" style="left:303.80px;top:599.07px;font-size:13.5px;font-weight:normal;color:#000;">Disetujui Oleh</div>
<div class="t" style="left:49.00px;top:715.57px;font-size:13.5px;font-weight:normal;color:#000;">Tgl</div>
<div class="t" style="left:251.00px;top:715.57px;font-size:13.5px;font-weight:normal;color:#000;">Tgl.</div>
<div class="t" style="left:581.00px;top:485.07px;font-size:13.5px;font-weight:normal;color:#000;">Sub Total</div>
<div class="t" style="left:442.30px;width:400px;text-align:right;top:485.07px;font-size:13.5px;font-weight:normal;color:#000;">7.126,8</div>
<div class="t" style="left:581.00px;top:508.97px;font-size:13.5px;font-weight:normal;color:#000;">Diskon</div>
<div class="t" style="left:442.30px;width:400px;text-align:right;top:508.97px;font-size:13.5px;font-weight:normal;color:#000;">0</div>
<div class="t" style="left:581.00px;top:541.17px;font-size:13.5px;font-weight:normal;color:#000;">PPN (11%)</div>
<div class="t" style="left:442.30px;width:400px;text-align:right;top:541.17px;font-size:13.5px;font-weight:normal;color:#000;">784</div>
<div class="t" style="left:581.00px;top:572.07px;font-size:13.5px;font-weight:normal;color:#000;">Biaya Lain-lain</div>
<div class="t" style="left:442.30px;width:400px;text-align:right;top:572.07px;font-size:13.5px;font-weight:normal;color:#000;">0</div>
<div class="t" style="left:581.30px;top:604.07px;font-size:13.5px;font-weight:bold;color:#000;">Total</div>
<div class="t" style="left:442.30px;width:400px;text-align:right;top:604.07px;font-size:13.5px;font-weight:bold;color:#000;">7.911</div>
<div class="t" style="left:699.00px;top:1192.84px;font-size:12px;font-weight:normal;color:#000;">Halaman 1 dari 1</div>

</div>
<div class="abs" style="left:1593px;top:0;width:326px;height:3px;background:#3c3c3c"></div>
<div class="abs" style="left:0;top:1px;width:1919px;height:1px;background:#464846;z-index:3"></div>
<div class="abs" style="left:1129px;top:678px;width:294.2px;height:47px;border:5px solid #ed1c24"></div>
<div id="scroll"><svg width="21" height="741" viewBox="0 0 21 741" style="display:block">
<path d="M11 7.6 L17.5 16.2 L4.5 16.2 Z" fill="#8f8f8f" stroke="#8f8f8f" stroke-width="2" stroke-linejoin="round"/>
<rect x="5" y="27" width="13" height="402" rx="6.5" fill="#8f8f8f"/>
<path d="M11 736.4 L17.5 727.8 L4.5 727.8 Z" fill="#8f8f8f" stroke="#8f8f8f" stroke-width="2" stroke-linejoin="round"/>
</svg></div>
<div id="scrollline"></div>
<div id="panel">
<div class="btn primary" style="top:11px;height:37.5px"><svg class="ico" style="left:90px;top:3px" width="30" height="27" viewBox="1715 18 30 27"><g fill="none" stroke="#fff" stroke-width="1.15" stroke-linecap="round" stroke-linejoin="round"><path d="M1725.6 27.2 V24.2 Q1725.6 23.4 1726.4 23.4 H1734.5 Q1735.3 23.4 1735.3 24.2 V27.2"/><path d="M1725.6 34.6 H1723.9 Q1722.8 34.6 1722.8 33.5 V28.9 Q1722.8 27.7 1724 27.7 H1736.9 Q1738 27.7 1738 28.9 V33.5 Q1738 34.6 1736.9 34.6 H1735.3"/><rect x="1725.6" y="32.9" width="9.7" height="5.7" rx="0.8" fill="#005fbf"/><path d="M1728.1 34.7 H1732.2 M1728.1 36.6 H1732.2 M1724.4 29.5 H1726.8"/></g></svg><span class="bt" style="left:124px">Cetak</span></div>
<div class="btn outline" style="top:61px;height:37.5px"><svg class="ico" style="left:78px;top:8.6px" width="15" height="14" viewBox="0 0 15 14"><g fill="none" stroke="#1a66c0" stroke-width="1.1"><path d="M2.5 5 V1.5 Q2.5 0.8 3.2 0.8 H9.5 L12.5 3.5 V5"/><path d="M9.5 0.8 V3.5 H12.5"/><rect x="0.8" y="5" width="13.4" height="5" rx="0.8"/><path d="M2.5 10 V12.5 Q2.5 13.2 3.2 13.2 H11.8 Q12.5 13.2 12.5 12.5 V10"/></g><text x="7.5" y="9.3" font-size="4.2" font-family="Liberation Sans" font-weight="bold" fill="#1a66c0" text-anchor="middle">XLS</text></svg><span class="bt" style="left:104px">Unduh XLS</span></div>
<div class="btn outline" style="top:102px;height:37.5px"><svg class="ico" style="left:77.3px;top:8.8px" width="15" height="14" viewBox="0 0 15 14"><g fill="none" stroke="#1a66c0" stroke-width="1.1"><path d="M2.5 5 V1.5 Q2.5 0.8 3.2 0.8 H9.5 L12.5 3.5 V5"/><path d="M9.5 0.8 V3.5 H12.5"/><rect x="0.8" y="5" width="13.4" height="5" rx="0.8"/><path d="M2.5 10 V12.5 Q2.5 13.2 3.2 13.2 H11.8 Q12.5 13.2 12.5 12.5 V10"/></g><text x="7.5" y="9.3" font-size="4.2" font-family="Liberation Sans" font-weight="bold" fill="#1a66c0" text-anchor="middle">PDF</text></svg><span class="bt" style="left:103px">Unduh PDF</span></div>
<div class="btn outline" style="top:155px;height:37.5px"><span class="bt" style="left:73px">e-Materai/e-Sign</span></div>
<div class="btn danger" style="top:207px;height:37.5px"><svg class="ico" style="left:98px;top:8.5px" width="16" height="16" viewBox="0 0 16 16"><g fill="none" stroke="#fff" stroke-width="1.4"><rect x="1" y="1" width="13.5" height="13.5" rx="2"/><path d="M4.5 4.5 L11 11 M11 4.5 L4.5 11"/></g></svg><span class="bt" style="left:124px">Tutup</span></div>
</div>
</body></html>
